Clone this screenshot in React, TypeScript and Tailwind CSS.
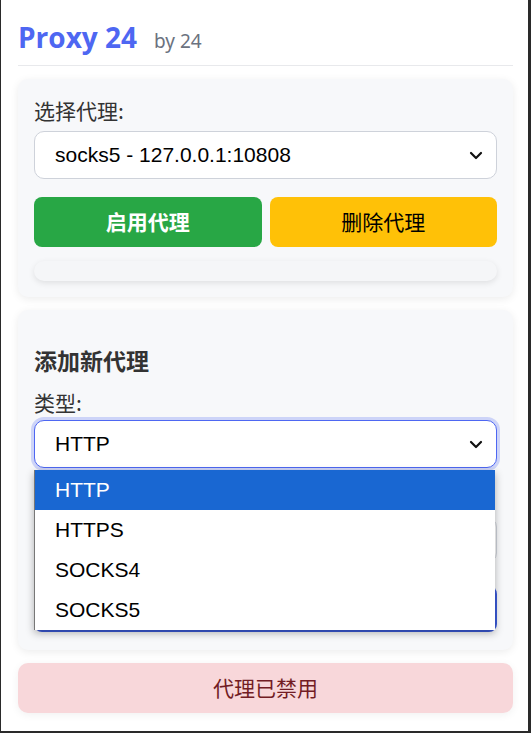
import React from "react";

const Chevron = () => (
  <svg width="16" height="16" viewBox="0 0 16 16" fill="none" stroke="#111" strokeWidth="2.2" strokeLinecap="round" strokeLinejoin="round">
    <path d="M3 6l5 5 5-5" />
  </svg>
);

export default function App() {
  const cjk = { fontFamily: '"Noto Sans CJK SC", "Noto Sans", sans-serif' };
  const arial = { fontFamily: '"Liberation Sans", Arial, sans-serif' };
  return (
    <div className="w-[531px] h-[733px] bg-[#2a2a2a] flex flex-col">
      <div className="flex-1 flex bg-[#2a2a2a] pl-[1px] pr-[3px] pb-[2px]">
        <div className="flex-1 bg-white pl-[17px] pr-[15px] pt-[19px] flex flex-col" style={cjk}>
          <div className="flex items-baseline gap-[17px] pb-[9px] border-b border-[#e8e9ec]">
            <span className="text-[28px] font-bold text-[#4e67f2] leading-[36px]" style={{ fontFamily: '"Open Sans", "Noto Sans", sans-serif' }}>Proxy 24</span>
            <span className="text-[19px] text-[#6b7280]" style={{ fontFamily: '"Noto Sans", sans-serif' }}>by 24</span>
          </div>

          <div className="mt-[13px] bg-[#f7f8fa] rounded-[10px] shadow-[0_2px_8px_rgba(0,0,0,0.08)] px-[16px] pt-[17px] pb-[16px]">
            <div className="text-[21px] text-[#333] leading-[28px]">选择代理:</div>
            <div className="mt-[7px] h-[48px] bg-white border border-[#ced2da] rounded-[10px] flex items-center justify-between pl-[20px] pr-[12px] text-[21px] text-black" style={arial}>
              <span>socks5 - 127.0.0.1:10808</span>
              <Chevron />
            </div>
            <div className="mt-[18px] grid grid-cols-2 gap-[8px]">
              <div className="h-[50px] rounded-[8px] bg-[#28a745] text-white text-[21px] font-bold flex items-center justify-center">启用代理</div>
              <div className="h-[50px] rounded-[8px] bg-[#ffc107] text-black text-[21px] flex items-center justify-center">删除代理</div>
            </div>
            <div className="mt-[14px] h-[20px] rounded-[10px] bg-[#f5f6f8] shadow-[0_2px_6px_rgba(0,0,0,0.1)]" />
          </div>

          <div className="mt-[13px] bg-[#f7f8fa] rounded-[10px] shadow-[0_2px_8px_rgba(0,0,0,0.08)] px-[16px] pt-[34px] pb-[18px] relative">
            <div className="text-[23px] font-bold text-[#333] leading-[32px]">添加新代理</div>
            <div className="mt-[12px] text-[21px] text-[#333] leading-[28px]">类型:</div>
            <div className="mt-[4px] h-[48px] bg-white border border-[#4e67f2] rounded-[10px] ring-[3px] ring-[#4e67f2]/25 flex items-center justify-between pl-[20px] pr-[12px] text-[21px] text-black" style={arial}>
              <span>HTTP</span>
              <Chevron />
            </div>
            <div className="mt-[8px] text-[21px] text-[#333] leading-[28px]">地址:</div>
            <div className="mt-[13px] h-[46px] bg-white border border-[#ced2da] rounded-[10px]" />
            <div className="mt-[23px] h-[46px] rounded-[8px] bg-[#3b5bdb] text-white text-[21px] font-bold flex items-center justify-center">添加代理</div>

            <div className="absolute left-[16px] top-[160px] w-[461px] bg-white border-l border-[#777] shadow-[0_3px_8px_rgba(0,0,0,0.3)] text-[21px] text-black" style={arial}>
              <div className="h-[40px] bg-[#1967d2] text-white flex items-center pl-[20px]">HTTP</div>
              <div className="h-[40px] flex items-center pl-[20px]">HTTPS</div>
              <div className="h-[40px] flex items-center pl-[20px]">SOCKS4</div>
              <div className="h-[40px] flex items-center pl-[20px]">SOCKS5</div>
            </div>
          </div>

          <div className="mt-[13px] h-[50px] rounded-[10px] bg-[#f8d7da] text-[#721c24] text-[21px] flex items-center justify-center shadow-[0_2px_8px_rgba(0,0,0,0.06)]">代理已禁用</div>
        </div>
      </div>
    </div>
  );
}
